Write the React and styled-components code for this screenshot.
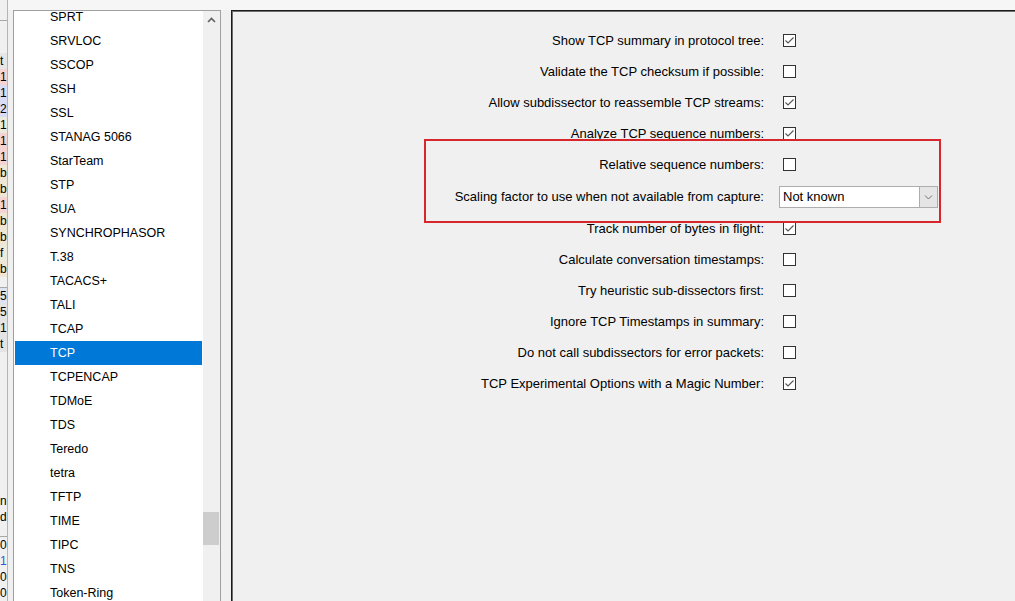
import React from 'react';
import styled, { createGlobalStyle } from 'styled-components';

const GlobalStyle = createGlobalStyle`
  html, body {
    margin: 0;
    padding: 0;
    background: #f0f0f0;
  }
  body {
    font-family: "Liberation Sans", Arial, sans-serif;
    font-size: 13px;
    color: #000;
  }
`;

const Screen = styled.div`
  position: relative;
  display: flex;
  width: 1015px;
  height: 601px;
  overflow: hidden;
  background: #f0f0f0;
`;

/* the window behind the dialog, only a sliver shows */
const BackStrip = styled.div`
  width: 7px;
  flex: none;
  display: flex;
  flex-direction: column;
  border-right: 1px solid #b4b4b4;
  background: #f0f0f0;
  overflow: hidden;
`;

const BackRow = styled.div`
  height: ${(p) => p.h || 16}px;
  flex: none;
  background: ${(p) => p.bg || 'transparent'};
  color: ${(p) => p.fg || '#000'};
  border-bottom: ${(p) => (p.line ? '1px solid #a8a8a8' : 'none')};
  box-sizing: border-box;
  font-size: 12px;
  line-height: 16px;
  white-space: nowrap;
`;

const Dialog = styled.div`
  flex: 1;
  display: flex;
  gap: 10px;
  padding: 10px 0 0 5px;
  background: linear-gradient(#f6f6f6 0 10px, #f0f0f0 10px);
  min-width: 0;
`;

const TreeBox = styled.div`
  width: 206px;
  flex: none;
  display: flex;
  border: 1px solid #a0a0a0;
  border-bottom: none;
  background: #fff;
`;

const Items = styled.div`
  width: 189px;
  flex: none;
  overflow: hidden;
`;

const ItemsInner = styled.div`
  margin-top: -6px;
`;

const Item = styled.div`
  height: 24px;
  margin: 0 1px;
  padding-left: 35px;
  display: flex;
  align-items: center;
  white-space: nowrap;
  font-size: 12.5px;
  background: ${(p) => (p.selected ? '#0078d7' : 'transparent')};
  color: ${(p) => (p.selected ? '#fff' : '#000')};
`;

const ScrollBar = styled.div`
  width: 17px;
  flex: none;
  background: #f0f0f0;
  display: flex;
  flex-direction: column;
`;

const ScrollArrow = styled.div`
  height: 17px;
  display: flex;
  align-items: center;
  justify-content: center;
`;

const ScrollThumb = styled.div`
  height: 33px;
  margin-right: 1px;
  background: #cdcdcd;
`;

const Panel = styled.div`
  flex: 1;
  border-top: 1px solid #1a1a1a;
  border-left: 1px solid #1a1a1a;
  box-shadow: inset 1px 1px 0 #6e6e6e;
  background: #f0f0f0;
  padding-top: 14px;
  display: flex;
  flex-direction: column;
`;

const Row = styled.div`
  height: ${(p) => (p.tall ? 33 : 31)}px;
  display: flex;
  align-items: center;
`;

const Label = styled.div`
  width: 532px;
  flex: none;
  text-align: right;
  white-space: nowrap;
`;

const Control = styled.div`
  margin-left: 15px;
  display: flex;
  align-items: center;
`;

const Box = styled.div`
  width: 11px;
  height: 11px;
  margin-left: 4px;
  border: 1px solid #333;
  background: #fff;
  display: flex;
`;

const Combo = styled.div`
  width: 157px;
  height: 20px;
  border: 1px solid #adadad;
  background: #fff;
  display: flex;
  align-items: center;
`;

const ComboText = styled.div`
  flex: 1;
  padding-left: 3px;
`;

const ComboButton = styled.div`
  width: 17px;
  height: 100%;
  border-left: 1px solid #adadad;
  background: #e5e5e5;
  display: flex;
  align-items: center;
  justify-content: center;
`;

const Highlight = styled.div`
  position: absolute;
  left: 424px;
  top: 139px;
  width: 513px;
  height: 80px;
  border: 2px solid #d8262d;
  pointer-events: none;
`;

const backRows = [
  { h: 21, line: true },
  { h: 32 },
  { t: 't', bg: '#e6e6e6' },
  { t: '1', bg: '#f6d3d3' },
  { t: '1', bg: '#dadcf6' },
  { t: '2', bg: '#dadcf6' },
  { t: '1', bg: '#eceadc' },
  { t: '1', bg: '#f6d3d3' },
  { t: '1', bg: '#f6d3d3' },
  { t: 'b', bg: '#efe7d3' },
  { t: 'b', bg: '#efe7d3' },
  { t: '1', bg: '#f6d3d3' },
  { t: 'b', bg: '#efe7d3' },
  { t: 'b', bg: '#efe7d3' },
  { t: 'f', bg: '#eceadc' },
  { t: 'b', bg: '#efe7d3' },
  { h: 11, line: true },
  { t: '5', bg: '#dfe3ee' },
  { t: '5', bg: '#e4e4e4' },
  { t: '1', bg: '#e4e4e4' },
  { t: 't', bg: '#e4e4e4' },
  { h: 141 },
  { t: 'n' },
  { t: 'd' },
  { h: 12, line: true },
  { t: '0' },
  { t: '1', fg: '#2a5bd7' },
  { t: '0' },
  { t: '0' },
];

const protocols = [
  'SPRT', 'SRVLOC', 'SSCOP', 'SSH', 'SSL', 'STANAG 5066', 'StarTeam', 'STP',
  'SUA', 'SYNCHROPHASOR', 'T.38', 'TACACS+', 'TALI', 'TCAP', 'TCP', 'TCPENCAP',
  'TDMoE', 'TDS', 'Teredo', 'tetra', 'TFTP', 'TIME', 'TIPC', 'TNS', 'Token-Ring',
];

const options = [
  { label: 'Show TCP summary in protocol tree:', checked: true },
  { label: 'Validate the TCP checksum if possible:', checked: false },
  { label: 'Allow subdissector to reassemble TCP streams:', checked: true },
  { label: 'Analyze TCP sequence numbers:', checked: true },
  { label: 'Relative sequence numbers:', checked: false },
  { label: 'Scaling factor to use when not available from capture:', combo: 'Not known' },
  { label: 'Track number of bytes in flight:', checked: true },
  { label: 'Calculate conversation timestamps:', checked: false },
  { label: 'Try heuristic sub-dissectors first:', checked: false },
  { label: 'Ignore TCP Timestamps in summary:', checked: false },
  { label: 'Do not call subdissectors for error packets:', checked: false },
  { label: 'TCP Experimental Options with a Magic Number:', checked: true },
];

const CheckMark = () => (
  <svg width="11" height="11" viewBox="0 0 11 11">
    <polyline points="1.5,5.5 4,8 9.5,2.5" fill="none" stroke="#555" strokeWidth="1.1" />
  </svg>
);

const Chevron = ({ up }) => (
  <svg width="9" height="6" viewBox="0 0 9 6">
    <polyline
      points={up ? '1,5 4.5,1.5 8,5' : '1,1.5 4.5,5 8,1.5'}
      fill="none"
      stroke={up ? '#606060' : '#707070'}
      strokeWidth={up ? 1.6 : 1}
    />
  </svg>
);

const App = () => (
  <Screen>
    <GlobalStyle />
    <BackStrip>
      {backRows.map((r, i) => (
        <BackRow key={i} h={r.h} bg={r.bg} fg={r.fg} line={r.line}>
          {r.t}
        </BackRow>
      ))}
    </BackStrip>
    <Dialog>
      <TreeBox>
        <Items>
          <ItemsInner>
            {protocols.map((p) => (
              <Item key={p} selected={p === 'TCP'}>
                {p}
              </Item>
            ))}
          </ItemsInner>
        </Items>
        <ScrollBar>
          <ScrollArrow>
            <Chevron up />
          </ScrollArrow>
          <ScrollThumb style={{ marginTop: 484 }} />
        </ScrollBar>
      </TreeBox>
      <Panel>
        {options.map((o) => (
          <Row key={o.label} tall={!!o.combo}>
            <Label>{o.label}</Label>
            <Control>
              {o.combo ? (
                <Combo>
                  <ComboText>{o.combo}</ComboText>
                  <ComboButton>
                    <Chevron />
                  </ComboButton>
                </Combo>
              ) : (
                <Box>{o.checked && <CheckMark />}</Box>
              )}
            </Control>
          </Row>
        ))}
      </Panel>
    </Dialog>
    <Highlight />
  </Screen>
);

export default App;
